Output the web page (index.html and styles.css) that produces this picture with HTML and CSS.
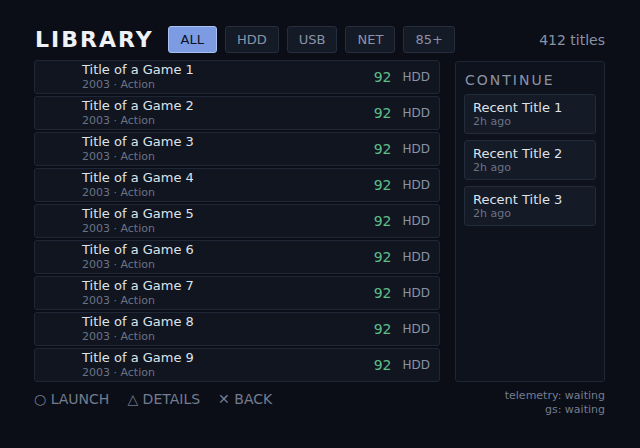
FILE: index.html
```html
<!DOCTYPE html>
<html>
<head>
<meta charset="utf-8">
<link rel="stylesheet" href="styles.css">
</head>
<body>
<div class="app">
  <header class="top">
    <h1 class="brand">LIBRARY</h1>
    <nav class="filters">
      <span class="chip active">ALL</span>
      <span class="chip">HDD</span>
      <span class="chip">USB</span>
      <span class="chip">NET</span>
      <span class="chip">85+</span>
    </nav>
    <span class="count">412 titles</span>
  </header>
  <main class="main">
    <ul class="list">
      <li class="row"><div class="info"><span class="title">Title of a Game 1</span><span class="meta">2003 · Action</span></div><span class="score">92</span><span class="src">HDD</span></li>
      <li class="row"><div class="info"><span class="title">Title of a Game 2</span><span class="meta">2003 · Action</span></div><span class="score">92</span><span class="src">HDD</span></li>
      <li class="row"><div class="info"><span class="title">Title of a Game 3</span><span class="meta">2003 · Action</span></div><span class="score">92</span><span class="src">HDD</span></li>
      <li class="row"><div class="info"><span class="title">Title of a Game 4</span><span class="meta">2003 · Action</span></div><span class="score">92</span><span class="src">HDD</span></li>
      <li class="row"><div class="info"><span class="title">Title of a Game 5</span><span class="meta">2003 · Action</span></div><span class="score">92</span><span class="src">HDD</span></li>
      <li class="row"><div class="info"><span class="title">Title of a Game 6</span><span class="meta">2003 · Action</span></div><span class="score">92</span><span class="src">HDD</span></li>
      <li class="row"><div class="info"><span class="title">Title of a Game 7</span><span class="meta">2003 · Action</span></div><span class="score">92</span><span class="src">HDD</span></li>
      <li class="row"><div class="info"><span class="title">Title of a Game 8</span><span class="meta">2003 · Action</span></div><span class="score">92</span><span class="src">HDD</span></li>
      <li class="row"><div class="info"><span class="title">Title of a Game 9</span><span class="meta">2003 · Action</span></div><span class="score">92</span><span class="src">HDD</span></li>
    </ul>
    <aside class="panel">
      <h2 class="panel-title">CONTINUE</h2>
      <div class="card"><span class="title">Recent Title 1</span><span class="meta">2h ago</span></div>
      <div class="card"><span class="title">Recent Title 2</span><span class="meta">2h ago</span></div>
      <div class="card"><span class="title">Recent Title 3</span><span class="meta">2h ago</span></div>
    </aside>
  </main>
  <footer class="foot">
    <div class="legend">
      <span class="key">○ LAUNCH</span>
      <span class="key">△ DETAILS</span>
      <span class="key">✕ BACK</span>
    </div>
    <div class="status">
      <span>telemetry: waiting</span>
      <span>gs: waiting</span>
    </div>
  </footer>
</div>
</body>
</html>
```
FILE: styles.css
```css
* { box-sizing: border-box; }
html, body { margin: 0; padding: 0; }
body {
  background: #0b0e16;
  width: 640px;
  height: 448px;
  overflow: hidden;
  font-family: "DejaVu Sans", sans-serif;
  color: #dfe3ea;
}
.app {
  padding: 26px 35px 0 34px;
}
.top {
  display: flex;
  align-items: center;
  height: 27px;
  margin-bottom: 7px;
}
.brand {
  margin: 0 14px 0 1px;
  font-size: 22px;
  font-weight: bold;
  letter-spacing: 2px;
  color: #eef1f6;
  line-height: 1;
}
.filters {
  display: flex;
  gap: 8px;
}
.chip {
  display: block;
  padding: 5px 11px;
  font-size: 13px;
  line-height: 15px;
  border: 1px solid #262e3e;
  border-radius: 3px;
  background: #141a26;
  color: #8a93a6;
}
.chip.active {
  background: #7d9be2;
  border-color: #a9c0f2;
  color: #0b1020;
  padding: 5px 12px;
}
.count {
  margin-left: auto;
  font-size: 14px;
  color: #8a93a6;
}
.main {
  display: flex;
  gap: 15px;
}
.list {
  list-style: none;
  margin: 0;
  padding: 0;
  width: 406px;
  display: flex;
  flex-direction: column;
  gap: 2px;
}
.row {
  height: 34px;
  display: flex;
  align-items: center;
  padding: 0 9px 0 47px;
  background: #10151f;
  border: 1px solid #1f2636;
  border-radius: 3px;
}
.info {
  display: flex;
  flex-direction: column;
  flex: 1;
}
.row .title {
  line-height: 14px;
}
.row .meta {
  margin-top: 1px;
}
.title {
  font-size: 13px;
  line-height: 15px;
  color: #dfe3ea;
}
.meta {
  font-size: 11px;
  line-height: 13px;
  color: #6b7386;
}
.score {
  font-size: 14px;
  color: #5fbd8a;
  margin-right: 11px;
}
.src {
  font-size: 12px;
  color: #8a93a6;
}
.panel {
  width: 150px;
  margin-top: 1px;
  background: #0e121c;
  border: 1px solid #1f2636;
  border-radius: 3px;
  padding: 10px 8px 8px;
  display: flex;
  flex-direction: column;
  gap: 6px;
}
.panel-title {
  margin: 0 0 0 1px;
  font-size: 14px;
  font-weight: normal;
  letter-spacing: 2px;
  color: #8a93a6;
}
.card {
  display: flex;
  flex-direction: column;
  padding: 5px 8px;
  height: 40px;
  background: #141a26;
  border: 1px solid #242c3c;
  border-radius: 3px;
}
.foot {
  display: flex;
  justify-content: space-between;
  align-items: flex-start;
  margin-top: 7px;
}
.legend {
  display: flex;
  gap: 18px;
  margin-top: 2px;
  font-size: 14px;
  color: #737c90;
}
.status {
  display: flex;
  flex-direction: column;
  align-items: flex-end;
  font-size: 11px;
  line-height: 14px;
  color: #737c90;
}
```
